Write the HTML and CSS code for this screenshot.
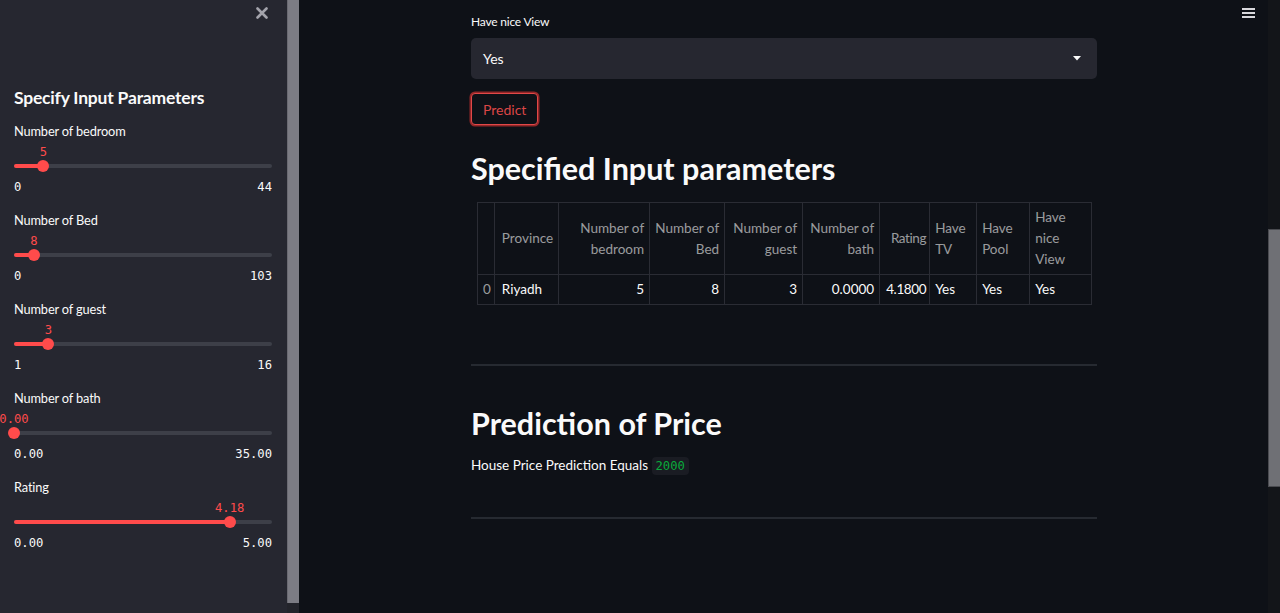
FILE: index.html
```html
<!DOCTYPE html>
<html>
<head>
<meta charset="utf-8">
<link rel="stylesheet" href="styles.css">
</head>
<body>
<div class="app">
  <aside class="sidebar">
    <div class="sb-top">
      <svg class="close" width="12" height="12" viewBox="0 0 12 12"><path d="M1.5 1.5l9 9M10.5 1.5l-9 9" stroke="#a3a3ab" stroke-width="2.6" stroke-linecap="round"/></svg>
    </div>
    <h2 class="sb-title">Specify Input Parameters</h2>

    <div class="slider">
      <div class="s-label">Number of bedroom</div>
      <div class="s-area">
        <div class="track"><div class="fill" style="width:11.36%"></div></div>
        <div class="s-value" style="left:11.36%">5</div>
        <div class="thumb" style="left:11.36%"></div>
      </div>
      <div class="ticks"><span>0</span><span>44</span></div>
    </div>

    <div class="slider">
      <div class="s-label">Number of Bed</div>
      <div class="s-area">
        <div class="track"><div class="fill" style="width:7.77%"></div></div>
        <div class="s-value" style="left:7.77%">8</div>
        <div class="thumb" style="left:7.77%"></div>
      </div>
      <div class="ticks"><span>0</span><span>103</span></div>
    </div>

    <div class="slider">
      <div class="s-label">Number of guest</div>
      <div class="s-area">
        <div class="track"><div class="fill" style="width:13.33%"></div></div>
        <div class="s-value" style="left:13.33%">3</div>
        <div class="thumb" style="left:13.33%"></div>
      </div>
      <div class="ticks"><span>1</span><span>16</span></div>
    </div>

    <div class="slider">
      <div class="s-label">Number of bath</div>
      <div class="s-area">
        <div class="track"><div class="fill" style="width:0%"></div></div>
        <div class="s-value" style="left:0%">0.00</div>
        <div class="thumb" style="left:0%"></div>
      </div>
      <div class="ticks"><span>0.00</span><span>35.00</span></div>
    </div>

    <div class="slider">
      <div class="s-label">Rating</div>
      <div class="s-area">
        <div class="track"><div class="fill" style="width:83.6%"></div></div>
        <div class="s-value" style="left:83.6%">4.18</div>
        <div class="thumb" style="left:83.6%"></div>
      </div>
      <div class="ticks"><span>0.00</span><span>5.00</span></div>
    </div>
  </aside>
  <div class="sb-scroll"><div class="sb-thumb"></div></div>

  <main class="main">
    <div class="menu"><span></span><span></span><span></span></div>
    <div class="content">
      <div class="w-label">Have nice View</div>
      <div class="select">
        <span>Yes</span>
        <svg class="caret" width="8" height="5" viewBox="0 0 8 5"><path d="M0 0h8L4 4.5z" fill="#fafafa"/></svg>
      </div>
      <button class="btn">Predict</button>

      <h2 class="h2 h2-first">Specified Input parameters</h2>
      <table class="df">
        <thead>
          <tr>
            <th class="c-idx"></th>
            <th class="c-prov left">Province</th>
            <th class="c-bedroom">Number of bedroom</th>
            <th class="c-bed">Number of Bed</th>
            <th class="c-guest">Number of guest</th>
            <th class="c-bath">Number of bath</th>
            <th class="c-rating">Rating</th>
            <th class="c-tv left">Have TV</th>
            <th class="c-pool left">Have Pool</th>
            <th class="c-view left">Have nice View</th>
          </tr>
        </thead>
        <tbody>
          <tr>
            <td class="idx">0</td>
            <td class="left prov">Riyadh</td>
            <td>5</td>
            <td>8</td>
            <td>3</td>
            <td>0.0000</td>
            <td class="rating">4.1800</td>
            <td class="left">Yes</td>
            <td class="left">Yes</td>
            <td class="left">Yes</td>
          </tr>
        </tbody>
      </table>

      <hr class="rule rule-1">

      <h2 class="h2 h2-second">Prediction of Price</h2>
      <p class="result">House Price Prediction Equals <code class="code">2000</code></p>

      <hr class="rule rule-2">
    </div>
  </main>
  <div class="main-scroll"><div class="main-thumb"></div></div>
</div>
</body>
</html>
```

FILE: styles.css
```css
* { box-sizing: border-box; }
html, body {
  margin: 0;
  padding: 0;
  width: 1280px;
  height: 613px;
  overflow: hidden;
  background: #0e1117;
  color: #fafafa;
  font-family: "Lato", "Noto Sans", sans-serif;
}
.app {
  display: flex;
  height: 613px;
}

/* Sidebar */
.sidebar {
  width: 287px;
  flex: none;
  background: #262730;
  padding: 0 15px 0 14px;
}
.sb-top {
  height: 26px;
  display: flex;
  justify-content: flex-end;
  align-items: center;
  padding-right: 4px;
}
.close { display: block; }
.sb-title {
  margin: 61px 0 12px;
  font-size: 17.5px;
  line-height: 21.6px;
  font-weight: 700;
  letter-spacing: -0.2px;
}
.slider {
  margin-bottom: 13px;
}
.s-label {
  font-size: 12.8px;
  line-height: 21px;
  letter-spacing: -0.15px;
  color: #fafafa;
}
.s-area {
  position: relative;
  height: 35px;
}
.track {
  position: absolute;
  left: 0;
  right: 0;
  top: 22.5px;
  height: 4px;
  border-radius: 2px;
  background: #3d3f48;
}
.fill {
  height: 4px;
  border-radius: 2px;
  background: #ff4b4b;
}
.thumb {
  position: absolute;
  top: 18.5px;
  width: 12px;
  height: 12px;
  margin-left: -6px;
  border-radius: 50%;
  background: #ff4b4b;
}
.s-value {
  position: absolute;
  top: 2px;
  transform: translateX(-50%);
  font-family: "DejaVu Sans Mono", monospace;
  font-size: 12.2px;
  line-height: 16px;
  color: #ff4b4b;
  white-space: nowrap;
}
.ticks {
  display: flex;
  justify-content: space-between;
  font-family: "DejaVu Sans Mono", monospace;
  font-size: 12.2px;
  line-height: 20px;
  color: #fafafa;
  padding-right: 1px;
  margin-right: -1px;
}

.sb-scroll {
  width: 12px;
  flex: none;
  background: #23242b;
}
.sb-thumb {
  height: 603px;
  background: #7c7c84;
  border-left: 1px solid #6a6a72;
}

/* Main */
.main {
  flex: 1;
  position: relative;
  display: flex;
  justify-content: center;
}
.menu {
  position: absolute;
  top: 8px;
  right: 13px;
  width: 13px;
  display: flex;
  flex-direction: column;
  gap: 2px;
}
.menu span {
  height: 2px;
  background: #d8d8dc;
}
.content {
  width: 626px;
  padding-top: 11px;
  margin-left: 1px;
}
.w-label {
  font-size: 12px;
  line-height: 21px;
  letter-spacing: -0.2px;
  margin-bottom: 6px;
}
.select {
  height: 41px;
  background: #262730;
  border-radius: 5px;
  display: flex;
  align-items: center;
  justify-content: space-between;
  padding: 0 16px 0 12px;
  font-size: 14px;
}
.caret { display: block; }
.btn {
  margin-top: 14px;
  height: 32px;
  padding: 0 11px;
  background: #0e1117;
  color: #dc4646;
  border: 1px solid #e04848;
  box-shadow: 0 0 0 1.5px rgba(190, 45, 45, 0.75);
  border-radius: 4px;
  font-family: "Lato", sans-serif;
  font-size: 14px;
  display: block;
}
.h2 {
  font-size: 30.5px;
  line-height: 38px;
  font-weight: 700;
  margin: 0;
}
.h2-first { margin-top: 24px; }
.h2-second { margin-top: 38px; }

.df {
  margin: 15px 0 0 6px;
  border-collapse: collapse;
  table-layout: fixed;
  font-size: 13.5px;
  line-height: 21px;
}
.df th, .df td {
  border: 1px solid #2a2c34;
  padding: 4px 5px;
  text-align: right;
  vertical-align: middle;
}
.df th {
  color: rgba(250, 250, 250, 0.6);
  font-weight: normal;
}
.df td { color: #fafafa; }
.df .left { text-align: left; }
.df td.idx { color: rgba(250, 250, 250, 0.6); text-align: left; padding: 4px 3px 4px 5px; }
.df th.c-idx { padding: 4px 3px; }
.df th.c-rating, .df td.rating { padding-left: 3px; padding-right: 3px; letter-spacing: -0.4px; }
.c-idx { width: 16px; }
.c-prov { width: 64px; }
.df th.c-prov, .df td.prov { padding-left: 7px; }
.c-bedroom { width: 91px; }
.c-bed { width: 75px; }
.c-guest { width: 78px; }
.c-bath { width: 77px; }
.c-rating { width: 50px; }
.c-tv { width: 47px; }
.c-pool { width: 53px; }
.c-view { width: 62px; }

.rule {
  border: none;
  height: 2px;
  background: #262a31;
  margin: 0;
}
.rule-1 { margin-top: 59px; }
.result {
  margin: 13px 0 0;
  font-size: 13.5px;
  line-height: 21px;
}
.code {
  font-family: "DejaVu Sans Mono", monospace;
  font-size: 12.2px;
  color: #09ab3b;
  background: #1a1c23;
  border-radius: 4px;
  padding: 2px 4px;
}
.rule-2 { margin-top: 40px; }

.main-scroll {
  width: 12px;
  flex: none;
  background: #131519;
  padding-top: 229px;
}
.main-thumb {
  height: 258px;
  background: #6f7075;
  border: 1px solid #4a4b50;
  border-right: none;
}
```
